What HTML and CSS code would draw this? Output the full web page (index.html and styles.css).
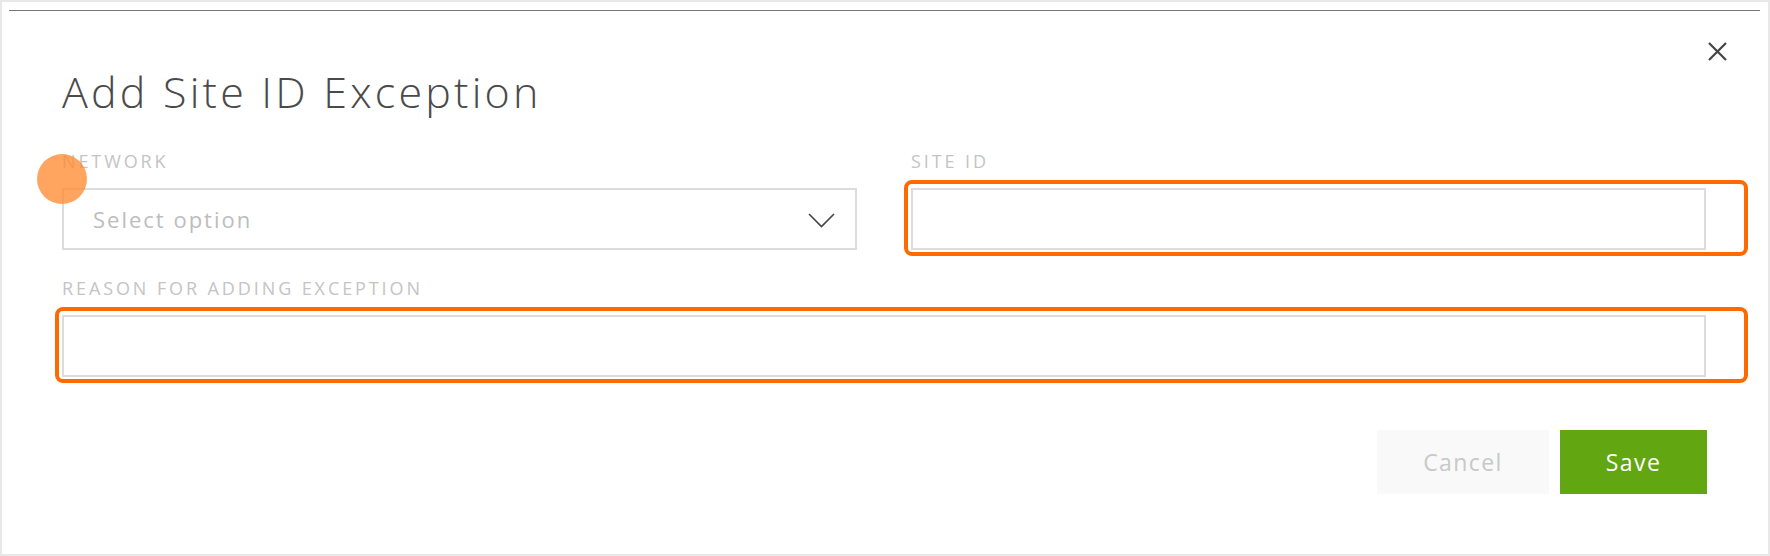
FILE: index.html
```html
<!DOCTYPE html>
<html>
<head>
<meta charset="utf-8">
<link rel="stylesheet" href="styles.css">
</head>
<body>
<div class="modal">
  <div class="topline"></div>
  <div class="header">
    <h1 class="title">Add Site ID Exception</h1>
    <button class="close" aria-label="Close">
      <svg width="19" height="19" viewBox="0 0 19 19"><path d="M1 1 L18 18 M18 1 L1 18" stroke="#444" stroke-width="2.2" fill="none"/></svg>
    </button>
  </div>
  <div class="form">
    <div class="field">
      <label class="label">NETWORK</label>
      <div class="select">
        <span class="placeholder">Select option</span>
        <svg class="chevron" width="27" height="15" viewBox="0 0 27 15"><path d="M1 1 L13.5 13.5 L26 1" stroke="#444" stroke-width="1.6" fill="none"/></svg>
      </div>
      <span class="tap"></span>
    </div>
    <div class="field">
      <label class="label">SITE ID</label>
      <div class="hl"><div class="input"></div></div>
    </div>
    <div class="field wide">
      <label class="label">REASON FOR ADDING EXCEPTION</label>
      <div class="hl"><div class="input"></div></div>
    </div>
  </div>
  <div class="actions">
    <button class="btn cancel">Cancel</button>
    <button class="btn save">Save</button>
  </div>
</div>
</body>
</html>
```
FILE: styles.css
```css
html, body { margin: 0; padding: 0; }
body {
  background: #e8e8e8;
  width: 1770px;
  height: 556px;
  overflow: hidden;
  font-family: "Open Sans", "Liberation Sans", sans-serif;
}
.modal {
  margin: 2px;
  width: 1766px;
  height: 552px;
  background: #fff;
  display: flex;
  flex-direction: column;
}
.topline {
  margin: 8px 8px 0 7px;
  border-top: 1px solid #777;
}
.header {
  display: flex;
  justify-content: space-between;
  align-items: flex-start;
  padding: 0 41px 0 60px;
}
.title {
  margin: 55px 0 0;
  font-weight: 300;
  font-size: 43px;
  line-height: 52px;
  color: #4a4a4a;
  letter-spacing: 3.2px;
}
.close {
  margin-top: 31px;
  padding: 0;
  border: 0;
  background: none;
  width: 19px;
  height: 19px;
  display: flex;
}
.form {
  display: grid;
  grid-template-columns: 795px 795px;
  column-gap: 54px;
  row-gap: 28px;
  padding: 33px 0 0 60px;
}
.field { position: relative; display: flex; flex-direction: column; }
.field.wide { grid-column: 1 / span 2; }
.label {
  font-size: 18px;
  line-height: 20px;
  color: #c4c4c4;
  letter-spacing: 2.9px;
  margin-bottom: 17px;
}
.select, .input {
  box-sizing: border-box;
  height: 62px;
  border: 2px solid #dcdcdc;
  background: #fff;
}
.select {
  display: flex;
  align-items: center;
  justify-content: space-between;
  padding: 0 20px 0 29px;
}
.placeholder {
  font-size: 22px;
  color: #bdbdbd;
  letter-spacing: 2px;
}
.chevron { margin-top: 2px; }
.hl { position: relative; }
.hl::after {
  content: "";
  position: absolute;
  left: -7px;
  top: -8px;
  right: -42px;
  bottom: -6px;
  border: 4px solid #ff6a00;
  border-radius: 8px;
}
.tap {
  position: absolute;
  left: -25px;
  top: 3px;
  width: 50px;
  height: 50px;
  border-radius: 50%;
  background: rgba(255, 140, 50, 0.78);
}
.actions {
  display: flex;
  justify-content: flex-end;
  gap: 11px;
  padding: 0 61px 0 0;
  margin-top: 53px;
}
.btn {
  height: 64px;
  border: 0;
  font-family: "Open Sans", "Liberation Sans", sans-serif;
  font-size: 23px;
  letter-spacing: 1.4px;
}
.cancel {
  width: 172px;
  background: #f9f9f9;
  color: #c8c8c8;
}
.save {
  width: 147px;
  background: #62a611;
  color: #fff;
  font-weight: 500;
}
```
